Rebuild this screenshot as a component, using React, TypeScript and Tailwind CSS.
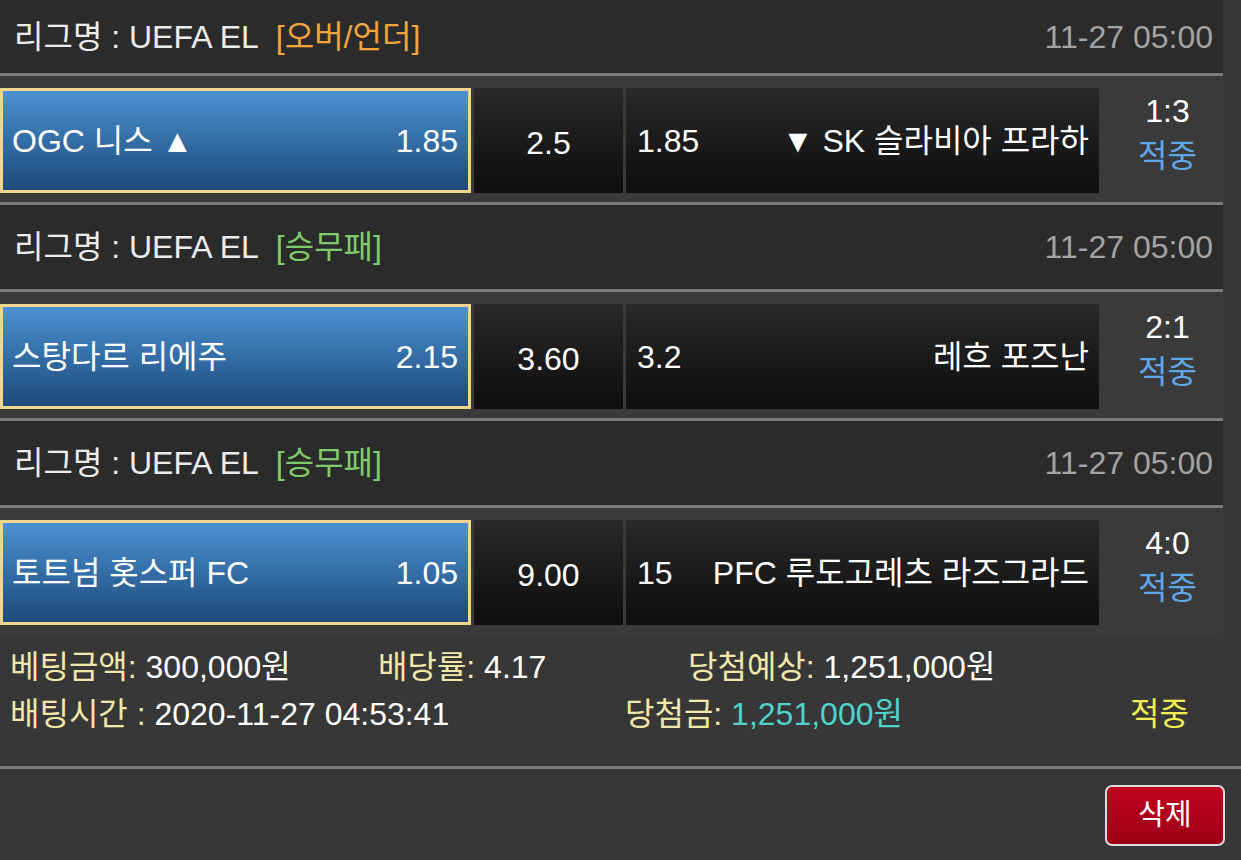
import React from "react";

type Match = {
  tag: string;
  tagColor: string;
  time: string;
  home: string;
  homeOdds: string;
  mid: string;
  awayOdds: string;
  away: string;
  score: string;
};

const matches: Match[] = [
  {
    tag: "[오버/언더]",
    tagColor: "text-[#f3a43c]",
    time: "11-27 05:00",
    home: "OGC 니스 ▲",
    homeOdds: "1.85",
    mid: "2.5",
    awayOdds: "1.85",
    away: "▼ SK 슬라비아 프라하",
    score: "1:3",
  },
  {
    tag: "[승무패]",
    tagColor: "text-[#7fcb6c]",
    time: "11-27 05:00",
    home: "스탕다르 리에주",
    homeOdds: "2.15",
    mid: "3.60",
    awayOdds: "3.2",
    away: "레흐 포즈난",
    score: "2:1",
  },
  {
    tag: "[승무패]",
    tagColor: "text-[#7fcb6c]",
    time: "11-27 05:00",
    home: "토트넘 홋스퍼 FC",
    homeOdds: "1.05",
    mid: "9.00",
    awayOdds: "15",
    away: "PFC 루도고레츠 라즈그라드",
    score: "4:0",
  },
];

function Line({ full }: { full?: boolean }) {
  return <div className={full ? "h-[3px] w-full bg-[#7b7b7b]" : "h-[3px] w-[1223px] bg-[#7b7b7b]"} />;
}

function MatchBlock({ m, first }: { m: Match; first: boolean }) {
  return (
    <>
      {/* league header */}
      <div
        className={`${first ? "h-[73px]" : "h-[84px]"} w-[1223px] bg-[#2b2b2b] flex items-center justify-between pl-[14px] pr-[10px]`}
      >
        <div className="text-[#ececec] flex items-center">
          <span>리그명 : UEFA EL</span>
          <span className={`ml-[17px] ${m.tagColor}`}>{m.tag}</span>
        </div>
        <span className="text-[#a3a3a3]">{m.time}</span>
      </div>
      <Line />

      {/* match row */}
      <div className="w-[1223px] bg-[#3a3a3a] pt-[12px] pb-[9px] flex gap-[3px]">
        <div className="w-[471px] h-[105px] border-[3px] border-[#f3d58c] bg-gradient-to-b from-[#4c92d3] to-[#1d4b7b] flex items-center justify-between pl-[9px] pr-[10px] text-white">
          <span>{m.home}</span>
          <span>{m.homeOdds}</span>
        </div>
        <div className="w-[149px] h-[105px] bg-gradient-to-b from-[#292929] to-[#0e0e0e] flex items-center justify-center pt-[5px] text-white">
          {m.mid}
        </div>
        <div className="w-[473px] h-[105px] bg-gradient-to-b from-[#292929] to-[#0e0e0e] flex items-center justify-between pl-[11px] pr-[10px] text-white">
          <span>{m.awayOdds}</span>
          <span>{m.away}</span>
        </div>
        <div className="flex-1 flex flex-col items-center justify-center leading-[45px] -mt-[14px] pl-[10px]">
          <span className="text-white">{m.score}</span>
          <span className="text-[#5fa6e6]">적중</span>
        </div>
      </div>
    </>
  );
}

export default function App() {
  return (
    <div className="min-h-screen w-[1241px] bg-[#373737] text-[32px] font-['Liberation_Sans','Noto_Sans_CJK_KR',sans-serif] overflow-hidden">
      {matches.map((m, i) => (
        <React.Fragment key={i}>
          <MatchBlock m={m} first={i === 0} />
          {i < matches.length - 1 && <Line />}
        </React.Fragment>
      ))}

      {/* betting summary */}
      <div className="w-full h-[132px] pt-[10px] pl-[10px] leading-[47px]">
        <div className="flex">
          <div className="w-[368px]">
            <span className="text-[#f1e7a8]">베팅금액:</span>
            <span className="text-white"> 300,000원</span>
          </div>
          <div className="w-[310px]">
            <span className="text-[#f1e7a8]">배당률:</span>
            <span className="text-white"> 4.17</span>
          </div>
          <div>
            <span className="text-[#f1e7a8]">당첨예상:</span>
            <span className="text-white"> 1,251,000원</span>
          </div>
        </div>
        <div className="flex">
          <div className="w-[615px]">
            <span className="text-[#f1e7a8]">배팅시간 :</span>
            <span className="text-white"> 2020-11-27 04:53:41</span>
          </div>
          <div className="w-[505px]">
            <span className="text-[#f1e7a8]">당첨금:</span>
            <span className="text-[#4fd2cb]"> 1,251,000원</span>
          </div>
          <div className="text-[#f2ee52]">적중</div>
        </div>
      </div>
      <Line full />

      {/* actions */}
      <div className="flex justify-end pt-[16px] pr-[16px]">
        <button className="w-[120px] h-[61px] rounded-[7px] border-[2px] border-[#dcdcdc] bg-gradient-to-b from-[#c0031f] to-[#9c0016] text-white text-[29px] flex items-center justify-center">
          삭제
        </button>
      </div>
    </div>
  );
}
